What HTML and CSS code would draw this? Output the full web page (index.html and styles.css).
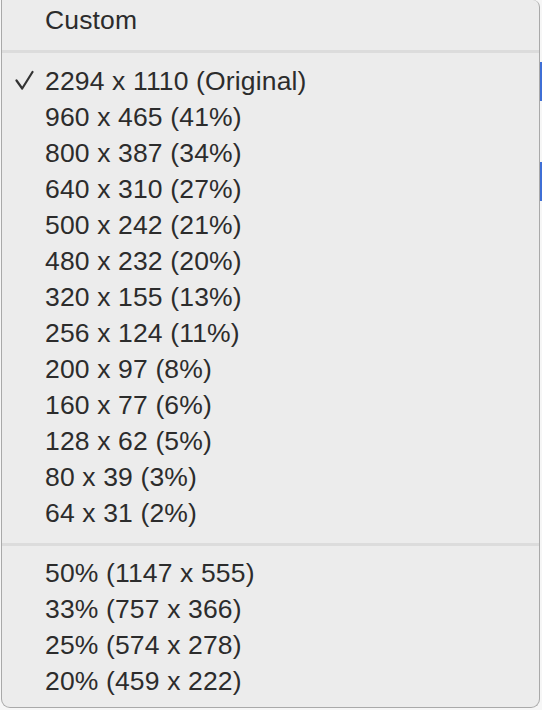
FILE: index.html
```html
<!DOCTYPE html>
<html>
<head>
<meta charset="utf-8">
<link rel="stylesheet" href="styles.css">
</head>
<body>
<div class="backdrop">
  <span class="blue blue-a"></span>
  <span class="blue blue-b"></span>
  <div class="menu">
    <div class="item">Custom</div>
    <div class="sep"></div>
    <div class="item checked">
      <svg class="check" width="22" height="22" viewBox="0 0 22 22"><path d="M1.5 10.5 L7.2 18.5 L17.5 2" fill="none" stroke="#333" stroke-width="2.2" stroke-linecap="round" stroke-linejoin="round"/></svg>
      2294 x 1110 (Original)</div>
    <div class="item">960 x 465 (41%)</div>
    <div class="item">800 x 387 (34%)</div>
    <div class="item">640 x 310 (27%)</div>
    <div class="item">500 x 242 (21%)</div>
    <div class="item">480 x 232 (20%)</div>
    <div class="item">320 x 155 (13%)</div>
    <div class="item">256 x 124 (11%)</div>
    <div class="item">200 x 97 (8%)</div>
    <div class="item">160 x 77 (6%)</div>
    <div class="item">128 x 62 (5%)</div>
    <div class="item">80 x 39 (3%)</div>
    <div class="item">64 x 31 (2%)</div>
    <div class="sep sep2"></div>
    <div class="item">50% (1147 x 555)</div>
    <div class="item">33% (757 x 366)</div>
    <div class="item">25% (574 x 278)</div>
    <div class="item">20% (459 x 222)</div>
  </div>
</div>
</body>
</html>
```
FILE: styles.css
```css
html, body {
  margin: 0;
  padding: 0;
  background: #f4f4f4;
}
.backdrop {
  position: relative;
  width: 542px;
  height: 710px;
  overflow: hidden;
  background: #f6f6f6;
}
.blue {
  position: absolute;
  right: 0;
  width: 2px;
  background: #3f6fd6;
}
.blue-a { top: 62px; height: 39px; }
.blue-b { top: 162px; height: 39px; }
.menu {
  position: relative;
  margin-left: 1px;
  width: 539px;
  height: 708px;
  box-sizing: border-box;
  background: #ececec;
  border: 1px solid #a9a9a9;
  border-top: none;
  border-radius: 0 7px 9px 9px;
  padding-top: 2px;
  font-family: "Liberation Sans", Arial, sans-serif;
  font-size: 26.5px;
  letter-spacing: 0.15px;
  color: #2c2c2c;
}
.item {
  position: relative;
  height: 36px;
  line-height: 36px;
  padding-left: 43px;
  white-space: nowrap;
}
.check {
  position: absolute;
  left: 13px;
  top: 7px;
}
.sep {
  height: 3px;
  background: #dcdcdc;
  margin: 12px 0 10px;
}
.sep2 {
  margin: 12px 0 9px;
}
```
